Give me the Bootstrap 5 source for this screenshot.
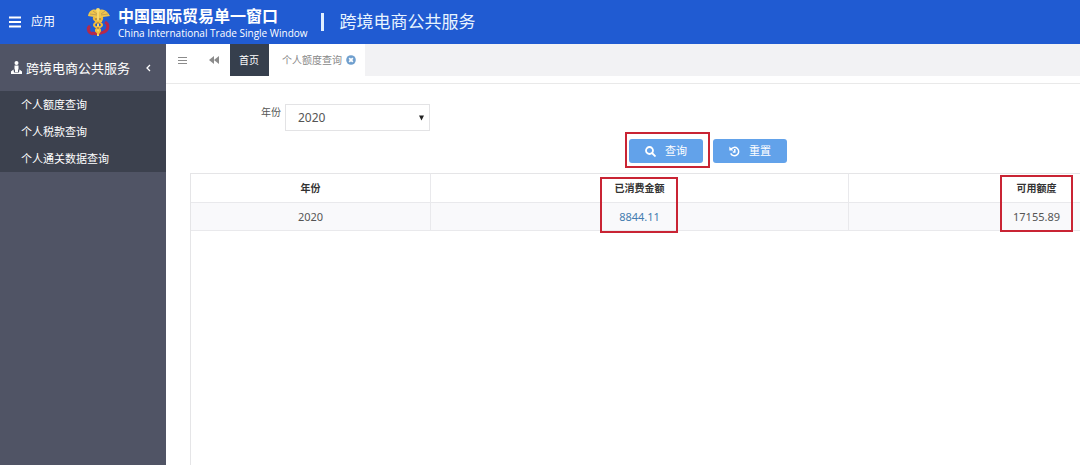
<!DOCTYPE html>
<html lang="zh-CN">
<head>
<meta charset="utf-8">
<meta name="viewport" content="width=device-width, initial-scale=1">
<title>跨境电商公共服务</title>
<link rel="stylesheet" href="https://cdn.jsdelivr.net/npm/bootstrap@5.3.0/dist/css/bootstrap.min.css">
<style>
body { font-family: "Noto Sans", "Noto Sans CJK SC", sans-serif; font-size: 12px; line-height: 18px; color: #555; background: #fff; }
a { text-decoration: none; }
svg { display: block; flex: none; }
.topbar { height: 44px; background: #205bd2; color: #fff; }
.topbar .apps { width: 85px; padding-left: 9px; gap: 10px; color: #fff; }
.brand-text { margin-left: 7px; }
.brand-cn { font-size: 16px; line-height: 20px; font-weight: 700; padding-top: 2px; }
.brand-en { font-family: "Open Sans", "Noto Sans", sans-serif; font-size: 10px; line-height: 14px; }
.bar-split { width: 3px; height: 18px; background: #e0efff; margin: 0 16px 0 13px; }
.system-name { font-size: 17px; line-height: 24px; font-weight: 400; margin: 0; padding-bottom: 1px; color: #e8f4ff; }
.sidebar { width: 166px; flex: none; background: #505465; }
.side-head { height: 47px; padding: 0 15px 0 11px; color: #fff; font-size: 13px; gap: 4px; border: 0; background: none; }
.submenu { background: #3c414e; }
.submenu a { display: block; color: #fff; font-size: 11px; line-height: 27px; padding-left: 21px; }
.tabs { height: 32px; background: #f2f2f4; font-size: 10px; }
.tool-btn { border: 0; background: #fff; width: 32px; padding: 0; color: #8b8b8b; display: flex; align-items: center; justify-content: center; }
.tabs .home { background: #363f4d; color: #fff; padding: 0 9px; width: 39px; }
.tabs .current { background: #fff; color: #888; padding: 0 9px 0 13px; gap: 4px; }
.close-tab { border: 0; background: none; padding: 0; }
.panel-body { margin-top: 7px; border-top: 1px solid #e9e9e9; padding: 20px 0 0 24px; }
.year-row { padding-left: 71px; gap: 4px; }
.year-row label { font-size: 10px; line-height: 16px; }
.year-select { width: 145px; height: 27px; padding: 0 12px; border: 1px solid #e3e3e5; border-radius: 0; color: #555; font-size: 12px; line-height: 26px;
  background: #fff url("data:image/svg+xml,%3Csvg xmlns='http://www.w3.org/2000/svg' viewBox='0 0 6 6'%3E%3Cpath d='M0 0h6L3 6z' fill='%23222'/%3E%3C/svg%3E") no-repeat right 5px center / 5px 6px; }
.actions { margin: 8px 0 10px calc(50% - 6px); gap: 10px; }
.btn-act { --bs-btn-color: #fff; --bs-btn-bg: #62a2ea; --bs-btn-hover-bg: #4d92de; --bs-btn-hover-color: #fff; --bs-btn-border-width: 0; width: 74px; height: 24px; padding: 0; border-radius: 3px; font-size: 11px; display: flex; align-items: center; justify-content: center; gap: 9px; }
.marked { position: relative; }
.marked::after { content: ""; position: absolute; border: 2px solid #c92434; pointer-events: none; z-index: 2; }
.mark-btn::after { inset: -7px -7px -5px -4px; }
.mark-paid::after { width: 78px; height: 56px; top: 3px; left: calc(50% - 40px); }
.mark-left::after { width: 73px; height: 57px; top: 1px; left: calc(50% - 37px); }
.results { border-left: 1px solid #e5e5e7; min-height: calc(100vh - 173px); overflow: hidden; }
.results table { width: 1034px; min-width: 116%; table-layout: fixed; margin: 0; font-size: 11px; text-align: center; border-collapse: separate; border-spacing: 0; }
.results th, .results td { padding: 0; height: 28px; vertical-align: middle; border-right: 1px solid #e9e9ec; border-bottom: 1px solid #e9e9ec; }
.results th { height: 30px; color: #333; border-top: 1px solid #e5e5e7; font-weight: 700; font-size: 10px; }
.results td { background: #f9f9fb; color: #555; }
.results td a { color: #447cb0; }
</style>
</head>
<body>
<div class="d-flex flex-column min-vh-100">
  <header class="topbar d-flex align-items-center">
    <a href="#" class="apps d-flex align-items-center">
      <svg width="12" height="12" viewBox="0 0 12 12" stroke="#fff" stroke-width="2"><path d="M0 1.5h12M0 6h12M0 10.5h12"/></svg>
      <span>应用</span>
    </a>
    <svg width="26" height="32" viewBox="0 0 26 32" fill="none">
      <path d="M5 20C2 22 3 27 8 28M20 16c4 2 4 8-1 10-4 2-8 2-12 1" stroke="#b5294b" stroke-width="3"/>
      <path d="M3 10C4 4 9 2 13 5c4-3 9-1 12 5l-7 1-1 5h-7l-1-5z" fill="#efc64c"/>
      <path d="M5 8l7 1M23 8l-7 1M8 5l4 3M20 5l-4 3" stroke="#c59f50"/>
      <path d="M13 4v26" stroke="#f7d970" stroke-width="2"/>
      <path d="M9 11c-2 5 8 4 8 8 0 3-7 2-6 6l3 3M17 11c2 5-8 4-8 8 0 3 7 2 6 6l-2 3" stroke="#f2bc38" stroke-width="2"/>
      <circle cx="13" cy="4" r="2" fill="#f9dd6e"/>
      <path d="M10 13h2M14 13h2M12 17h2M12 22h2" stroke="#8b673e"/>
    </svg>
    <div class="brand-text">
      <div class="brand-cn">中国国际贸易单一窗口</div>
      <div class="brand-en">China International Trade Single Window</div>
    </div>
    <div class="bar-split"></div>
    <h1 class="system-name">跨境电商公共服务</h1>
  </header>
  <div class="d-flex flex-grow-1">
    <nav class="sidebar">
      <button type="button" class="side-head d-flex align-items-center w-100">
        <svg width="11" height="13" viewBox="0 0 11 13" fill="#fff"><circle cx="5.500" cy="2" r="2"/><path d="M3.500 4.500h4v4H7V11H4V8.500h-.5zM2.500 8.500L0 10.500V13h11v-2.500l-2.500-2-.5 3H3z"/></svg>
        <span>跨境电商公共服务</span>
        <svg class="ms-auto" width="5" height="8" viewBox="0 0 5 8" fill="none" stroke="#fff" stroke-width="1.300"><path d="M4 1L1 4l3 3"/></svg>
      </button>
      <div class="submenu">
        <a href="#">个人额度查询</a>
        <a href="#">个人税款查询</a>
        <a href="#">个人通关数据查询</a>
      </div>
    </nav>
    <main class="flex-grow-1 overflow-hidden">
      <div class="tabs d-flex align-items-stretch">
        <button type="button" class="tool-btn" aria-label="菜单"><svg width="9" height="9" viewBox="0 0 9 9" stroke="currentColor"><path d="M0 1.500h9M0 4.500h9M0 7.500h9"/></svg></button>
        <button type="button" class="tool-btn" aria-label="向左"><svg width="10" height="8" viewBox="0 0 10 8" fill="currentColor"><path d="M5 0v8L0 4zM10 0v8L5 4z"/></svg></button>
        <a href="#" class="home d-flex align-items-center text-nowrap">首页</a>
        <div class="current d-flex align-items-center">
          <span>个人额度查询</span>
          <button type="button" class="close-tab" aria-label="关闭"><svg width="10" height="10" viewBox="0 0 10 10"><circle cx="5" cy="5" r="4.800" fill="#6f9fce"/><path d="M3.200 3.200l3.600 3.600M6.800 3.200L3.200 6.800" stroke="#fff" stroke-width="1.800"/></svg></button>
        </div>
      </div>
      <div class="panel-body">
        <div class="year-row d-flex align-items-start">
          <label for="year">年份</label>
          <select id="year" class="form-select year-select"><option>2020</option></select>
        </div>
        <div class="actions d-flex">
          <div class="marked mark-btn">
            <button type="button" class="btn btn-act"><svg width="11" height="11" viewBox="0 0 11 11" fill="none" stroke="#fff" stroke-width="1.800"><circle cx="4.500" cy="4.500" r="3.500"/><path d="M7 7l3.500 3.500"/></svg>查询</button>
          </div>
          <button type="button" class="btn btn-act"><svg width="11" height="11" viewBox="0 0 11 11" fill="none" stroke="#fff" stroke-width="1.500"><path d="M2 3.200a4.200 4.200 0 1 1-.3 4.200M5.800 3v3H3.800"/><path d="M.3.500v4h4z" fill="#fff" stroke="none"/></svg>重置</button>
        </div>
        <div class="results">
          <table>
            <colgroup><col style="width:240px"><col style="width:418px"><col style="width:376px"></colgroup>
            <thead><tr><th>年份</th><th class="marked mark-paid">已消费金额</th><th class="marked mark-left">可用额度</th></tr></thead>
            <tbody><tr><td>2020</td><td><a href="#">8844.11</a></td><td>17155.89</td></tr></tbody>
          </table>
        </div>
      </div>
    </main>
  </div>
</div>
<script src="https://cdn.jsdelivr.net/npm/bootstrap@5.3.0/dist/js/bootstrap.bundle.min.js"></script>
</body>
</html>
